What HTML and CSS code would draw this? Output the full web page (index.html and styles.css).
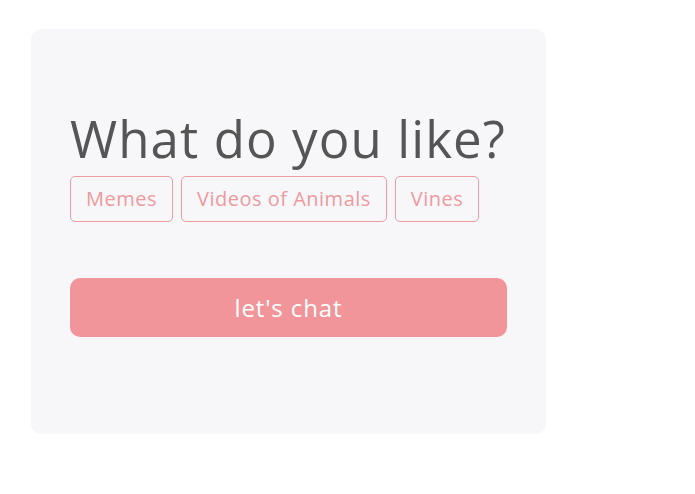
FILE: index.html
```html
<!DOCTYPE html>
<html>
<head>
<meta charset="utf-8" />
<title>What do you like?</title>
<link rel="stylesheet" href="styles.css">
</head>
<body>
<div class="card">
	<h1 class="card_title">What do you like?</h1>
	<ul class="tags">
		<li><a>Memes</a></li>
		<li><a>Videos of Animals</a></li>
		<li><a>Vines</a></li>
	</ul>
	<a class="chat_btn">let's chat</a>
</div>
</body>
</html>
```

FILE: styles.css
```css
*{margin:0;padding:0;}
body{background:#fff;font-family:"Open Sans",sans-serif;}
li{list-style:none;}
a{text-decoration:none;cursor:pointer;}
.card{
	background:#f7f7f9;
	border-radius:10px;
	width:437px;
	height:405px;
	margin:29px 0 0 31px;
	padding:0 39px;
}
.card_title{
	font-weight:400;
	font-size:51px;
	line-height:60px;
	color:#555;
	padding-top:79px;
	letter-spacing:1.1px;
	white-space:nowrap;
}
.tags{
	display:flex;
	gap:8px;
	margin-top:8px;
}
.tags a{
	display:block;
	border:1px solid #ec9ca2;
	border-radius:5px;
	padding:0 15px;
	height:44px;
	line-height:44px;
	font-size:20px;
	letter-spacing:0.5px;
	color:#ee9a9f;
}
.chat_btn{
	display:block;
	margin-top:56px;
	height:59px;
	line-height:59px;
	background:#f2959a;
	border-radius:10px;
	color:#fff;
	text-align:center;
	font-size:24px;
	letter-spacing:0.9px;
}
```
